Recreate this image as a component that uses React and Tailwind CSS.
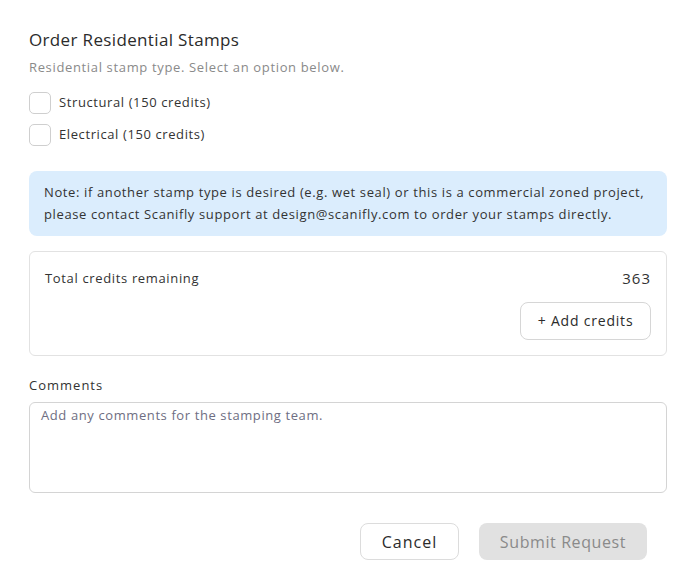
import React, { useState } from "react";

const font = { fontFamily: '"Open Sans", "Noto Sans", sans-serif' };

const Checkbox = ({ label, checked, onChange }) => (
  <label className="flex items-center gap-2 h-[22px] cursor-pointer">
    <span
      onClick={onChange}
      className={`w-[22px] h-[22px] rounded-[5px] border ${
        checked ? "bg-[#2e6fd8] border-[#2e6fd8]" : "bg-white border-[#cfcfcf]"
      }`}
    />
    <span className="text-[13px] tracking-[0.6px] text-[#333]">{label}</span>
  </label>
);

const App = () => {
  const [structural, setStructural] = useState(false);
  const [electrical, setElectrical] = useState(false);

  return (
    <div className="w-[692px] h-[583px] bg-white" style={font}>
      <div className="pl-[29px] pr-[25px] pt-[28px]">
        <h2 className="text-[17px] leading-[24px] font-medium tracking-[0.35px] text-[#2b2b2b]">
          Order Residential Stamps
        </h2>
        <p className="mt-[5px] text-[13px] leading-[20px] tracking-[0.65px] text-[#8a8a8a]">
          Residential stamp type. Select an option below.
        </p>

        <div className="mt-[15px] flex flex-col gap-[10px]">
          <Checkbox
            label="Structural (150 credits)"
            checked={structural}
            onChange={() => setStructural(!structural)}
          />
          <Checkbox
            label="Electrical (150 credits)"
            checked={electrical}
            onChange={() => setElectrical(!electrical)}
          />
        </div>

        <div className="mt-[25px] rounded-lg bg-[#dbedfd] px-[15px] pt-[10px] pb-[11px] text-[13px] leading-[22px] tracking-[0.62px] text-[#333]">
          Note: if another stamp type is desired (e.g. wet seal) or this is a
          commercial zoned project, please contact Scanifly support at
          design@scanifly.com to order your stamps directly.
        </div>

        <div className="mt-[15px] h-[105px] rounded-md border border-[#e2e2e2] px-[15px] pt-[15px]">
          <div className="flex justify-between items-center">
            <span className="text-[13px] tracking-[0.65px] text-[#333]">
              Total credits remaining
            </span>
            <span className="text-[15px] font-medium tracking-[1px] text-[#333]">363</span>
          </div>
          <div className="mt-[12px] flex justify-end">
            <button className="h-[38px] w-[131px] rounded-lg border border-[#d6d6d6] bg-white text-[14px] tracking-[0.8px] text-[#2b2b2b]">
              + Add credits
            </button>
          </div>
        </div>

        <label className="block mt-[20px] text-[13px] leading-[18px] tracking-[1px] text-[#333]">
          Comments
        </label>
        <textarea
          placeholder="Add any comments for the stamping team."
          className="mt-[8px] block w-full h-[91px] resize-none rounded-md border border-[#d4d4d4] px-[11px] py-[3px] text-[13px] tracking-[0.6px] text-[#333] placeholder:text-[#6e6e82] outline-none"
        />

        <div className="mt-[30px] flex justify-end gap-[20px] pr-[20px]">
          <button className="h-[37px] w-[99px] rounded-lg border border-[#dcdcdc] bg-white text-[16px] tracking-[1px] text-[#2b2b2b]">
            Cancel
          </button>
          <button
            disabled
            className="h-[37px] w-[168px] rounded-lg bg-[#e1e1e1] text-[16px] tracking-[0.6px] text-[#8a8a8a]"
          >
            Submit Request
          </button>
        </div>
      </div>
    </div>
  );
};

export default App;
